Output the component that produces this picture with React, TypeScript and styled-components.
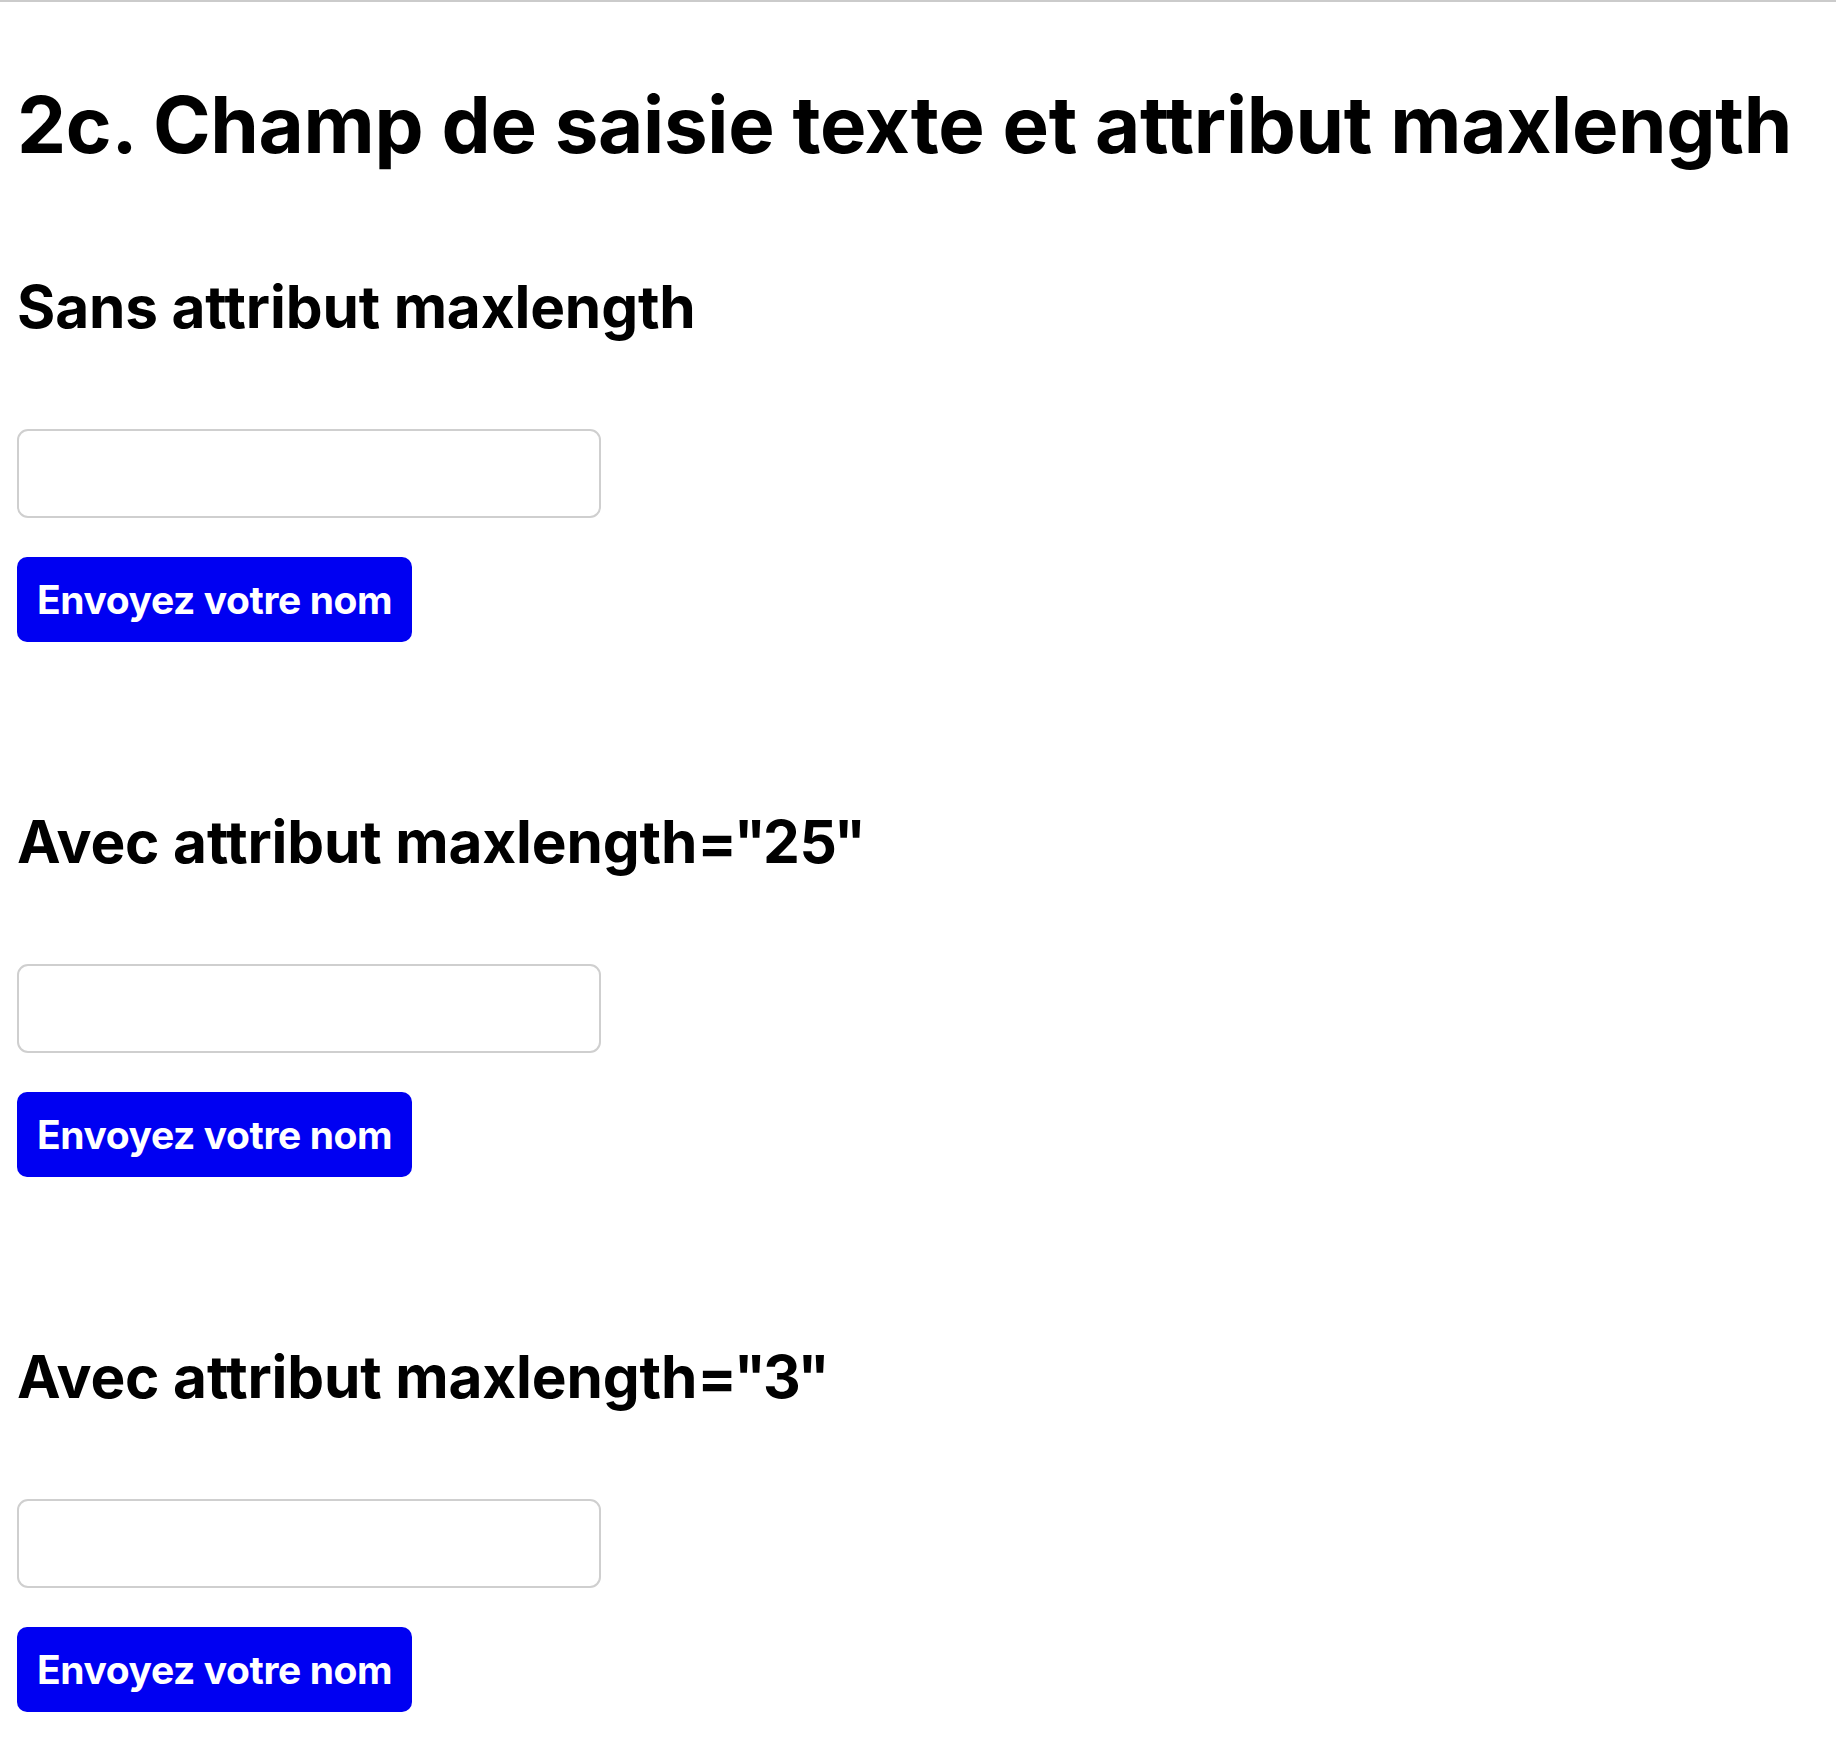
import React from "react";
import styled, { createGlobalStyle } from "styled-components";

const Global = createGlobalStyle`
  html, body {
    margin: 0;
    padding: 0;
    background: #ffffff;
  }
  body {
    font-family: Inter, "Noto Sans", "Liberation Sans", sans-serif;
    color: #000000;
  }
  * { box-sizing: border-box; }
`;

const Page = styled.main`
  border-top: 2px solid #cbcbcb;
  padding: 0 17px 40px;
  display: flex;
  flex-direction: column;
`;

const Title = styled.h1`
  margin: 76px 0 0;
  font-size: 78px;
  font-weight: 700;
  line-height: 1.21;
  letter-spacing: -0.3px;
`;

const Section = styled.section<{ $first?: boolean }>`
  display: flex;
  flex-direction: column;
  align-items: stretch;
  margin-top: ${(p) => (p.$first ? "100px" : "165px")};
`;

const Heading = styled.h2`
  margin: 0;
  font-size: 58.5px;
  font-weight: 700;
  line-height: 1.21;
  letter-spacing: -0.15px;
  white-space: nowrap;
`;

const Quote = styled.span`
  margin: 0 -3px;
`;

const Form = styled.form`
  display: flex;
  flex-direction: column;
  align-items: flex-start;
  gap: 39px;
  margin-top: 86px;
`;

const TextInput = styled.input`
  width: 584px;
  height: 89px;
  border: 2px solid #cfcfcf;
  border-radius: 11px;
  background: #ffffff;
  padding: 0 16px;
  font-family: inherit;
  font-size: 39px;
  outline: none;
`;

const SubmitButton = styled.button`
  display: inline-flex;
  align-items: center;
  height: 85px;
  padding: 0 20px;
  border: none;
  border-radius: 10px;
  background: #0000f2;
  color: #ffffff;
  font-family: inherit;
  font-size: 39px;
  font-weight: 700;
  line-height: 1.21;
  letter-spacing: -0.4px;
  cursor: pointer;
`;

const sections = [
  { label: "Sans attribut maxlength", max: undefined as number | undefined },
  { label: "Avec attribut maxlength=", max: 25 },
  { label: "Avec attribut maxlength=", max: 3 },
];

export default function App() {
  return (
    <>
      <Global />
      <Page>
        <Title>2c. Champ de saisie texte et attribut maxlength</Title>
        {sections.map((s, i) => (
          <Section key={i} $first={i === 0}>
            <Heading>
              {s.label}
              {s.max !== undefined && (
                <>
                  <Quote>"</Quote>
                  {s.max}
                  <Quote>"</Quote>
                </>
              )}
            </Heading>
            <Form onSubmit={(e) => e.preventDefault()}>
              <TextInput type="text" maxLength={s.max} aria-label="Nom" />
              <SubmitButton type="submit">Envoyez votre nom</SubmitButton>
            </Form>
          </Section>
        ))}
      </Page>
    </>
  );
}
